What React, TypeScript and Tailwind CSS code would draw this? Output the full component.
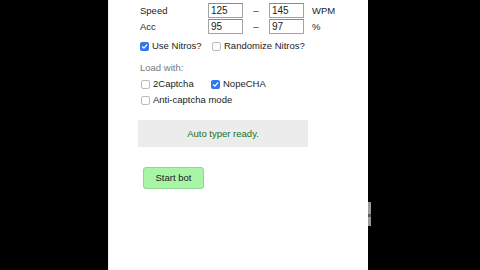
import React from "react";

function Box({ checked }: { checked?: boolean }) {
  if (checked) {
    return (
      <span className="w-[9px] h-[9px] rounded-[2px] bg-[#2f76f0] flex items-center justify-center shrink-0">
        <svg width="7" height="7" viewBox="0 0 10 10" fill="none">
          <path d="M2 5.2 L4.2 7.4 L8.2 2.6" stroke="white" strokeWidth="1.8" strokeLinecap="round" strokeLinejoin="round" />
        </svg>
      </span>
    );
  }
  return <span className="w-[9px] h-[9px] rounded-[2px] border border-[#bdbdbd] bg-white shrink-0" />;
}

function Check({ label, checked, w }: { label: string; checked?: boolean; w?: string }) {
  return (
    <div className={`flex items-center gap-[3px] ${w ?? ""}`}>
      <Box checked={checked} />
      <span>{label}</span>
    </div>
  );
}

function Field({ v }: { v: string }) {
  return (
    <div className="w-[35px] h-[15px] border border-[#a3a3a3] border-t-[#8a8a8a] bg-white pl-[2px] flex items-center text-[10px] leading-none text-[#222]">
      {v}
    </div>
  );
}

export default function App() {
  return (
    <div
      className="w-[480px] h-[270px] bg-black flex relative overflow-hidden"
      style={{ fontFamily: '"Liberation Sans", Arial, sans-serif' }}
    >
      <div className="ml-[108px] w-[260px] h-full bg-white border-l border-[#eeeeee] pl-[30px] pt-[3px] text-[9.5px] leading-[12px] text-[#1c1c1c] flex flex-col">
        <div className="grid grid-cols-[69px_35px_26px_35px_auto] gap-y-[1px] items-center">
          <span className="ml-[1px]">Speed</span>
          <Field v="125" />
          <span className="text-center">–</span>
          <Field v="145" />
          <span className="ml-[8px]">WPM</span>
          <span className="ml-[1px]">Acc</span>
          <Field v="95" />
          <span className="text-center">–</span>
          <Field v="97" />
          <span className="ml-[8px]">%</span>
        </div>

        <div className="flex mt-[6px] h-[12px] items-center ml-[1px]">
          <Check label="Use Nitros?" checked w="w-[72px]" />
          <Check label="Randomize Nitros?" />
        </div>

        <div className="mt-[10px] ml-[1px] text-[#7a7a7a]">Load with:</div>

        <div className="flex mt-[4px] h-[12px] items-center ml-[2px]">
          <Check label="2Captcha" w="w-[70px]" />
          <Check label="NopeCHA" checked />
        </div>

        <div className="flex mt-[4px] h-[12px] items-center ml-[2px]">
          <Check label="Anti-captcha mode" />
        </div>

        <div className="mt-[14px] ml-[-1px] w-[170px] h-[27px] bg-[#ececec] flex items-center justify-center text-[#17701a]">
          Auto typer ready.
        </div>

        <button className="mt-[20px] ml-[4px] w-[61px] h-[22px] rounded-[3px] bg-[#a8f5a8] border border-[#8fd68f] text-[#1c1c1c] text-[9.5px] flex items-center justify-center">
          Start bot
        </button>
      </div>

      <div className="absolute left-[368px] top-[202px] w-[3px] h-[24px] bg-[#9a9a9a]" />
      <div className="absolute left-[368px] top-[214px] w-[3px] h-[3px] bg-[#5a5a5a]" />
    </div>
  );
}
